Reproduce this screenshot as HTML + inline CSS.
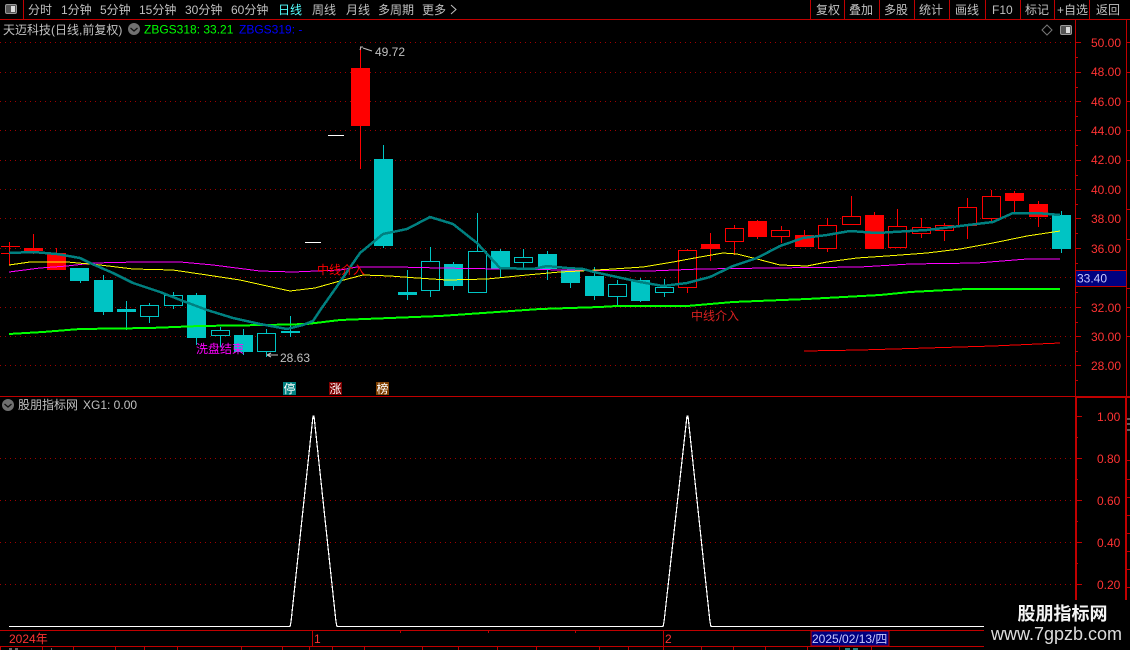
<!DOCTYPE html>
<html><head><meta charset="utf-8"><title>天迈科技</title>
<style>
html,body{margin:0;padding:0;background:#000;width:1130px;height:650px;overflow:hidden}
svg{display:block}
text{font-family:"Liberation Sans","Noto Sans CJK SC",sans-serif;font-size:12px;fill:#c0c0c0}
.ax text{fill:#ff3333}
</style></head><body>
<svg width="1130" height="650" viewBox="0 0 1130 650" xmlns="http://www.w3.org/2000/svg">
<rect width="1130" height="650" fill="#000"/>
<!-- grid -->
<g stroke="#a00000" stroke-width="1" stroke-dasharray="1 4" shape-rendering="crispEdges">
<path d="M0 42.5H1073M0 72.5H1073M0 101.5H1073M0 130.5H1073M0 160.5H1073M0 189.5H1073M0 218.5H1073M0 248.5H1073M0 277.5H1073M0 307.5H1073M0 336.5H1073M0 365.5H1073"/>
<path d="M0 458.5H1073M0 500.5H1073M0 542.5H1073M0 584.5H1073"/>
</g>
<!-- top bar -->
<g stroke="#c00000" stroke-width="1" shape-rendering="crispEdges" fill="none">
<path d="M0 19.5H1130M23.5 0V19M810.5 0V19M844.5 0V19M879.5 0V19M914.5 0V19M949.5 0V19M985.5 0V19M1020.5 0V19M1054.5 0V19M1089.5 0V19"/>
<path d="M0 396.5H1130"/>
<path d="M1075.5 19V396M1126.5 19V396"/>
<path d="M1075 42.5h6M1075 72.5h6M1075 101.5h6M1075 130.5h6M1075 160.5h6M1075 189.5h6M1075 218.5h6M1075 248.5h6M1075 307.5h6M1075 336.5h6M1075 365.5h6"/>
<path d="M1075 57.5h3M1075 87.5h3M1075 116.5h3M1075 145.5h3M1075 175.5h3M1075 204.5h3M1075 233.5h3M1075 263.5h3M1075 292.5h3M1075 322.5h3M1075 351.5h3M1075 380.5h3"/>
<path d="M1126 42.5h4M1126 72.5h4M1126 101.5h4M1126 130.5h4M1126 160.5h4M1126 209.5h4M1126 239.5h4M1126 288.5h4M1126 307.5h4M1126 336.5h4"/>
</g>
<g stroke="#c00000" stroke-width="2" shape-rendering="crispEdges" fill="none">
<path d="M1076 397V600M1126 397V600M1076 397H1130"/>
</g>
<g stroke="#c00000" stroke-width="1" shape-rendering="crispEdges" fill="none">
<path d="M1076 416.5h6M1076 458.5h6M1076 500.5h6M1076 542.5h6M1076 584.5h6M1076 437.5h2M1076 479.5h2M1076 521.5h2M1076 563.5h2"/>
<path d="M1126 460.5h4M1126 479.5h4M1126 497.5h4M1126 515.5h4M1126 533.5h4M1126 551.5h4M1126 569.5h4M1126 587.5h4"/>
</g>
<path d="M1127 419h3M1127 424h3M1127 430h3" stroke="#bbb" stroke-width="1" shape-rendering="crispEdges"/>

<!-- left toggle icon -->
<rect x="5.5" y="4.5" width="11" height="9" rx="1.5" fill="#555" stroke="#999"/>
<rect x="11" y="6" width="4" height="6" fill="#dcdcdc"/>
<!-- menu -->
<text x="28" y="14">分时</text><text x="61" y="14">1分钟</text><text x="100" y="14">5分钟</text><text x="139" y="14">15分钟</text><text x="185" y="14">30分钟</text><text x="231" y="14">60分钟</text>
<text x="278" y="14" style="fill:#55ffff">日线</text><text x="312" y="14">周线</text><text x="346" y="14">月线</text><text x="378" y="14">多周期</text><text x="422" y="14">更多</text>
<path d="M451 5l5 4.5-5 4.5" fill="none" stroke="#c0c0c0"/>
<text x="816" y="14">复权</text><text x="849" y="14">叠加</text><text x="884" y="14">多股</text><text x="919" y="14">统计</text><text x="955" y="14">画线</text><text x="992" y="14">F10</text><text x="1025" y="14">标记</text><text x="1057" y="14">+自选</text><text x="1096" y="14">返回</text>
<!-- title row -->
<text x="3" y="34">天迈科技(日线,前复权)</text>
<circle cx="134" cy="29" r="6" fill="#707070"/><path d="M130.5 28l3.5 3 3.5-3" fill="none" stroke="#111" stroke-width="1.3"/>
<text x="144" y="33.500" style="fill:#00ff00">ZBGS318: 33.21</text>
<text x="239" y="33.500" style="fill:#0000ff">ZBGS319: -</text>
<path d="M1047 25l5 5-5 5-5-5z" fill="none" stroke="#777"/>
<rect x="1060.500" y="25.500" width="11" height="9" rx="1.500" fill="#555" stroke="#999"/><rect x="1066" y="27" width="4" height="6" fill="#dcdcdc"/>

<!-- candles -->
<g shape-rendering="crispEdges">
<path fill="none" stroke="#00c4c4" d="M80.500 268V283M103.500 275V315M126.500 301V330M149.500 303V323M173.500 292V309M196.500 293V345M220.500 327V347M243.500 329V355M266.500 329V357M290.500 316V337M383.500 145V248M407.500 270V300M430.500 247V297M453.500 262V290M477.500 213V293M500.500 249V277M523.500 249V269M547.500 251V280M570.500 267V288M594.500 267V300M617.500 280V306M640.500 278V302M664.500 279V297"/>
<path fill="none" stroke="#ff0000" d="M9.500 242V265M33.500 234V254M56.500 248V270M360.500 47V169M687.500 249V293M710.500 233V261M734.500 225V255M757.500 220V239M781.500 226V243M804.500 230V247M827.500 218V252M851.500 196V224M874.500 212V249M897.500 209V247M921.500 218V238M944.500 223V241M967.500 198V239M991.500 190V222M1014.500 191V212M1038.500 201V227M1 253.500H9"/>
<path fill="none" stroke="#00c4c4" d="M1061.500 211V253"/>
<g fill="#ff0000">
<rect x="1" y="246" width="19" height="1"/><rect x="24" y="248" width="19" height="3"/><rect x="47" y="253" width="19" height="17"/><rect x="351" y="68" width="19" height="58"/><rect x="701" y="244" width="19" height="5"/><rect x="748" y="221" width="19" height="16"/><rect x="795" y="235" width="19" height="12"/><rect x="865" y="215" width="19" height="34"/><rect x="1005" y="193" width="19" height="8"/><rect x="1029" y="204" width="19" height="13"/>
</g>
<g fill="#000" stroke="#ff0000">
<rect x="678.500" y="250.500" width="18" height="37"/><rect x="725.500" y="228.500" width="18" height="13"/><rect x="771.500" y="230.500" width="18" height="6"/><rect x="818.500" y="225.500" width="18" height="23"/><rect x="842.500" y="216.500" width="18" height="8"/><rect x="888.500" y="226.500" width="18" height="21"/><rect x="912.500" y="227.500" width="18" height="6"/><rect x="935.500" y="225.500" width="18" height="5"/><rect x="958.500" y="207.500" width="18" height="18"/><rect x="982.500" y="196.500" width="18" height="22"/>
</g>
<g fill="#00c4c4">
<rect x="70" y="268" width="19" height="13"/><rect x="94" y="280" width="19" height="32"/><rect x="117" y="309" width="19" height="3"/><rect x="187" y="295" width="19" height="43"/><rect x="234" y="335" width="19" height="17"/><rect x="281" y="331" width="19" height="2"/><rect x="374" y="159" width="19" height="87"/><rect x="398" y="292" width="19" height="3"/><rect x="444" y="264" width="19" height="22"/><rect x="491" y="251" width="19" height="18"/><rect x="538" y="254" width="19" height="15"/><rect x="561" y="270" width="19" height="13"/><rect x="585" y="276" width="19" height="20"/><rect x="631" y="280" width="19" height="21"/><rect x="1052" y="215" width="19" height="34"/>
</g>
<g fill="#000" stroke="#00c4c4">
<rect x="140.500" y="305.500" width="18" height="11"/><rect x="164.500" y="295.500" width="18" height="10"/><rect x="211.500" y="330.500" width="18" height="5"/><rect x="257.500" y="333.500" width="18" height="18"/><rect x="421.500" y="261.500" width="18" height="29"/><rect x="468.500" y="251.500" width="18" height="41"/><rect x="514.500" y="257.500" width="18" height="5"/><rect x="608.500" y="284.500" width="18" height="12"/><rect x="655.500" y="287.500" width="18" height="5"/>
</g>
<path d="M305 242.500h16M328 135.500h16" stroke="#fff" fill="none"/>
<!-- MA lines -->
<polyline fill="none" stroke="#ff0000" stroke-width="1" points="804,351 860,350 927,348 993,346 1060,343"/>
<polyline fill="none" stroke="#00ff00" stroke-width="2" points="9,334 43,332 80,329 150,328 200,326 267,325 307,324 340,320 440,316 540,309 600,307 617,306 687,306 733,302 807,299 880,295 910,292 967,289 1060,289"/>
<polyline fill="none" stroke="#ff00ff" stroke-width="1" points="9,272 40,268 67,266 93,263 137,262 180,262 213,265 260,271 293,272 340,270 357,267 397,267 440,268 500,269 567,270 650,271 700,269 770,268 860,267 910,264 977,263 1027,259 1060,259"/>
<polyline fill="none" stroke="#ffff00" stroke-width="1" points="9,265 30,262 67,262 100,265 133,269 173,270 207,275 240,280 267,286 290,291 315,288 340,281 363,275 390,276 417,278 447,280 487,279 527,275 560,272 580,271 613,269 643,267 673,262 700,257 723,253 737,254 757,259 780,265 807,266 827,262 857,258 887,256 927,253 960,249 993,243 1027,236 1060,231"/>
<polyline fill="none" stroke="#008080" stroke-width="2.500" points="9,253 33,252 57,254 80,258 90,263 113,273 133,283 160,292 183,301 207,310 233,318 260,324 287,329 303,325 313,321 321,309 340,282 360,253 383,234 407,229 430,217 453,224 477,243 500,268 533,269 547,266 567,268 583,269 594,272 617,277 640,282 663,286 687,283 710,277 733,266 757,258 780,246 803,238 827,235 850,231 877,233 893,232 927,230 960,226 993,222 1013,213 1037,213 1060,215"/>
</g>
<!-- chart labels -->
<path d="M361 47l-1 3M360 47h3M363 48l9 3" fill="none" stroke="#c0c0c0"/>
<text x="375" y="56">49.72</text>
<path d="M267 355h11M267 355l4-2M267 355l4 2" fill="none" stroke="#c0c0c0"/>
<text x="280" y="362">28.63</text>
<text x="317" y="274" style="fill:#ff0000">中线介入</text>
<text x="691" y="320" style="fill:#d82020">中线介入</text>
<text x="196" y="353" style="fill:#ff00ff">洗盘结束</text>
<rect x="283" y="382" width="13" height="13" fill="#008080"/><text x="283.500" y="393" style="fill:#fff;font-size:12px">停</text>
<rect x="329" y="382" width="13" height="13" fill="#800000"/><text x="329.500" y="393" style="fill:#fff;font-size:12px">涨</text>
<rect x="376" y="382" width="13" height="13" fill="#804000"/><text x="376.500" y="393" style="fill:#fff;font-size:12px">榜</text>
<!-- axis labels -->
<g class="ax">
<text x="1091" y="47">50.00</text><text x="1091" y="76">48.00</text><text x="1091" y="106">46.00</text><text x="1091" y="135">44.00</text><text x="1091" y="164">42.00</text><text x="1091" y="194">40.00</text><text x="1091" y="223">38.00</text><text x="1091" y="253">36.00</text><text x="1091" y="312">32.00</text><text x="1091" y="341">30.00</text><text x="1091" y="370">28.00</text>
<text x="1097" y="421">1.00</text><text x="1097" y="463">0.80</text><text x="1097" y="505">0.60</text><text x="1097" y="547">0.40</text><text x="1097" y="589">0.20</text>
</g>
<rect x="1075.500" y="270.500" width="51" height="16" fill="#000080" stroke="#c00000" shape-rendering="crispEdges"/>
<text x="1077" y="282.500" style="fill:#c8c8ff">33.40</text>
<!-- lower panel -->
<circle cx="8" cy="405" r="6" fill="#707070"/><path d="M4.500 404l3.500 3 3.500-3" fill="none" stroke="#111" stroke-width="1.300"/>
<text x="18" y="409">股朋指标网</text><text x="83" y="409">XG1: 0.00</text>
<polyline fill="none" stroke="#fff" stroke-width="1.200" shape-rendering="crispEdges" points="9,626.500 290,626.500 291,622 313,416 314,416 336,622 337,626.500 663,626.500 664,622 687,416 688,416 710,622 711,626.500 984,626.500"/>
<!-- bottom axis -->
<g stroke="#c00000" fill="none" shape-rendering="crispEdges">
<path d="M0 630.500H984M0 646.500H984M312.500 630V646M663.500 630V646M400.500 630V633M488.500 630V633M575.500 630V633"/>
<path d="M0.500 647V650M42.500 647V650M73.500 647V650M115.500 647V650M144.500 647V650M177.500 647V650M241.500 647V650M282.500 647V650M309.500 647V650M332.500 647V650M364.500 647V650M422.500 647V650M458.500 647V650M497.500 647V650M536.500 647V650M599.500 647V650M628.500 647V650M663.500 647V650M701.500 647V650M733.500 647V650M765.500 647V650M807.500 647V650M839.500 647V650M871.500 647V650"/>
</g>
<path d="M9 649h3M15 649h3M51 649h1" stroke="#ccc" shape-rendering="crispEdges"/>
<path d="M845 649h5M853 649h5" stroke="#55ffff" shape-rendering="crispEdges"/>
<text x="9" y="643" style="fill:#ff3333">2024年</text>
<text x="314" y="643" style="fill:#ff3333">1</text>
<text x="665" y="643" style="fill:#ff3333">2</text>
<rect x="811" y="631" width="78" height="15" fill="#000080" stroke="#c00000" shape-rendering="crispEdges"/>
<text x="812" y="643" style="fill:#c8c8ff">2025/02/13/四</text>
<!-- watermark -->
<rect x="984" y="600" width="146" height="50" fill="#000"/>
<text x="1017.500" y="620" style="fill:#f4f4f4;font-size:18px;font-weight:700">股朋指标网</text>
<text x="991" y="640" style="fill:#dcdcdc;font-size:18px">www.7gpzb.com</text>
</svg>
</body></html>
